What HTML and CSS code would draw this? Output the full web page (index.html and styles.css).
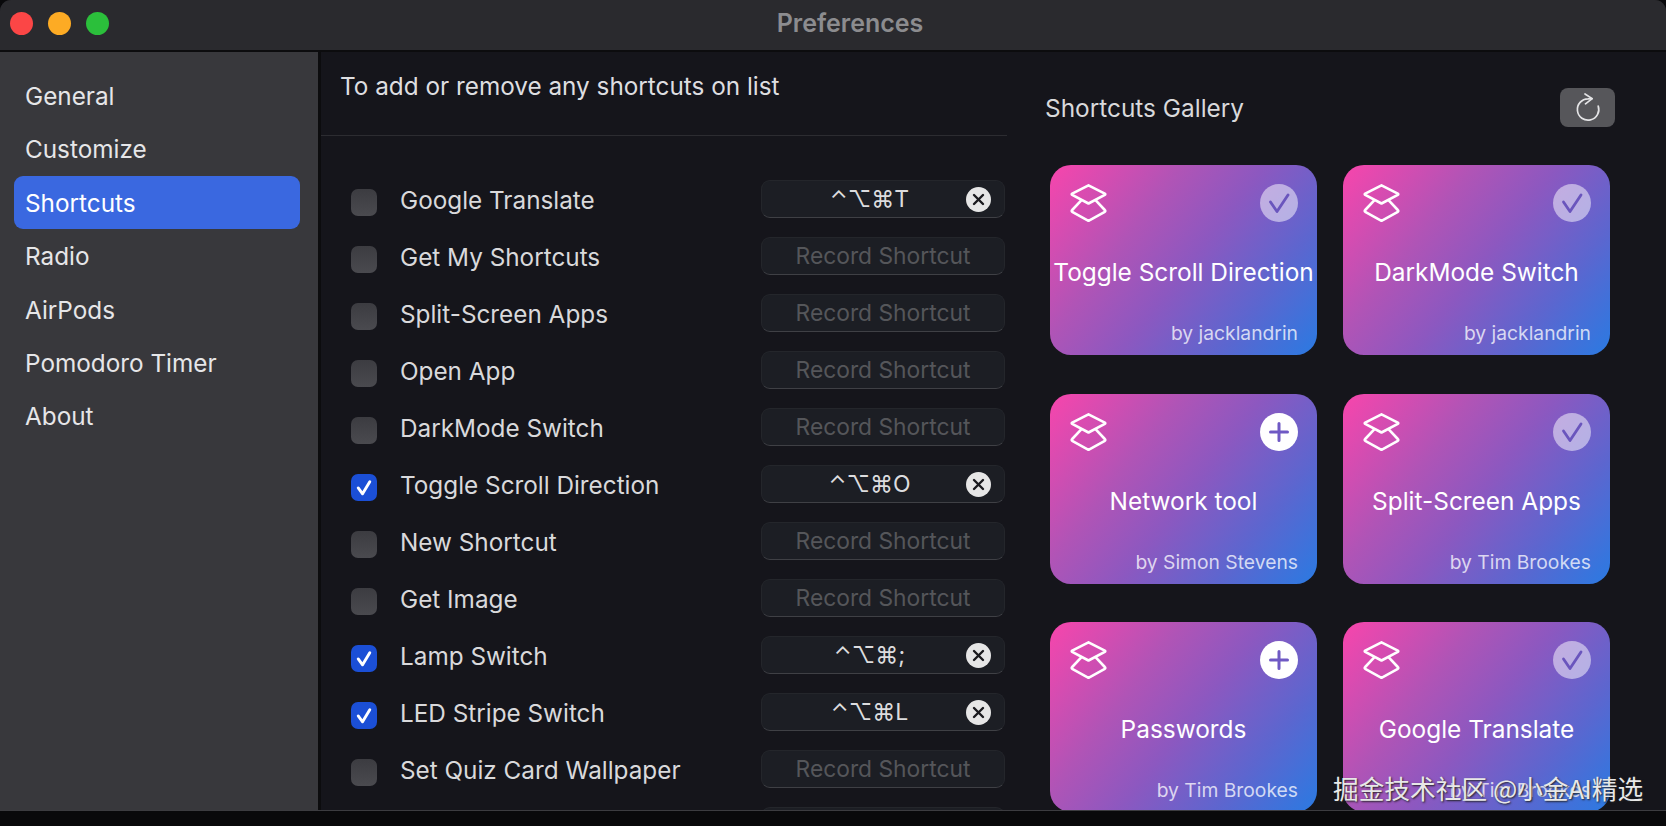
FILE: index.html
```html
<!DOCTYPE html>
<html lang="en">
<head>
<meta charset="utf-8">
<title>Preferences</title>
<link rel="stylesheet" href="styles.css">
</head>
<body>
<svg class="defs" width="0" height="0" aria-hidden="true">
  <symbol id="layers" viewBox="0 0 37 38">
    <path d="M18.500 1.300 L34.800 9.600 Q35.800 10.200 34.800 10.800 L18.500 19.500 L2.200 10.800 Q1.200 10.200 2.200 9.600 Z" fill="none" stroke="#fff" stroke-width="2.600" stroke-linejoin="round"/>
    <path d="M10.800 16.800 L2.200 26 Q1.200 27 2.200 27.800 L18.500 36.800 L34.800 27.800 Q35.800 27 34.800 26 L26.200 16.800" fill="none" stroke="#fff" stroke-width="2.600" stroke-linejoin="round" stroke-linecap="round"/>
  </symbol>
  <symbol id="tick" viewBox="0 0 38 38">
    <path d="M10.500 18 L17 27.500 L28 11" fill="none" stroke="#6a55bd" stroke-width="2.800" stroke-linecap="round" stroke-linejoin="round"/>
  </symbol>
  <symbol id="plus" viewBox="0 0 38 38">
    <path d="M10.500 19 H27.500 M19 10.500 V27.500" fill="none" stroke="#6f59c4" stroke-width="3" stroke-linecap="round"/>
  </symbol>
  <symbol id="cross" viewBox="0 0 25 25">
    <path d="M8 8 L17 17 M17 8 L8 17" fill="none" stroke="#1a1a1e" stroke-width="2.400" stroke-linecap="round"/>
  </symbol>
  <symbol id="check" viewBox="0 0 27 27">
    <path d="M7.500 14 L12 20 L19.500 7.500" fill="none" stroke="#fff" stroke-width="3" stroke-linecap="round" stroke-linejoin="round"/>
  </symbol>
</svg>

<div class="window">
  <header class="titlebar">
    <div class="lights">
      <span class="light red"></span>
      <span class="light amber"></span>
      <span class="light green"></span>
    </div>
    <h1 class="wintitle">Preferences</h1>
  </header>

  <div class="main">
    <nav class="sidebar">
      <a class="navitem">General</a>
      <a class="navitem">Customize</a>
      <a class="navitem active">Shortcuts</a>
      <a class="navitem">Radio</a>
      <a class="navitem">AirPods</a>
      <a class="navitem">Pomodoro Timer</a>
      <a class="navitem">About</a>
    </nav>

    <section class="listpane">
      <p class="hint">To add or remove any shortcuts on list</p>
      <div class="rows">
        <div class="row"><span class="box"></span><span class="label">Google Translate</span><div class="field set"><span class="keys">⌃⌥⌘T</span><span class="clear"><svg><use href="#cross"/></svg></span></div></div>
        <div class="row"><span class="box"></span><span class="label">Get My Shortcuts</span><div class="field">Record Shortcut</div></div>
        <div class="row"><span class="box"></span><span class="label">Split-Screen Apps</span><div class="field">Record Shortcut</div></div>
        <div class="row"><span class="box"></span><span class="label">Open App</span><div class="field">Record Shortcut</div></div>
        <div class="row"><span class="box"></span><span class="label">DarkMode Switch</span><div class="field">Record Shortcut</div></div>
        <div class="row"><span class="box on"><svg><use href="#check"/></svg></span><span class="label">Toggle Scroll Direction</span><div class="field set"><span class="keys">⌃⌥⌘O</span><span class="clear"><svg><use href="#cross"/></svg></span></div></div>
        <div class="row"><span class="box"></span><span class="label">New Shortcut</span><div class="field">Record Shortcut</div></div>
        <div class="row"><span class="box"></span><span class="label">Get Image</span><div class="field">Record Shortcut</div></div>
        <div class="row"><span class="box on"><svg><use href="#check"/></svg></span><span class="label">Lamp Switch</span><div class="field set"><span class="keys">⌃⌥⌘;</span><span class="clear"><svg><use href="#cross"/></svg></span></div></div>
        <div class="row"><span class="box on"><svg><use href="#check"/></svg></span><span class="label">LED Stripe Switch</span><div class="field set"><span class="keys">⌃⌥⌘L</span><span class="clear"><svg><use href="#cross"/></svg></span></div></div>
        <div class="row"><span class="box"></span><span class="label">Set Quiz Card Wallpaper</span><div class="field">Record Shortcut</div></div>
        <div class="row"><span class="box"></span><span class="label"></span><div class="field"></div></div>
      </div>
    </section>

    <section class="gallery">
      <div class="galleryhead">
        <h2 class="gallerytitle">Shortcuts Gallery</h2>
        <button class="refresh" type="button" aria-label="Refresh">
          <svg viewBox="0 0 26 30" width="26" height="30"><path d="M17 5.600 L13 5.800 A10.700 10.700 0 1 0 23.200 13" fill="none" stroke="#e4e4e6" stroke-width="1.700" stroke-linecap="round"/><path d="M10 1 L17.200 5.600 L10.500 10.800" fill="none" stroke="#e4e4e6" stroke-width="1.700" stroke-linecap="round" stroke-linejoin="round"/></svg>
        </button>
      </div>
      <div class="cards">
        <article class="card"><div class="cardtop"><svg class="layers"><use href="#layers"/></svg><span class="badge added"><svg><use href="#tick"/></svg></span></div><div class="cardname">Toggle Scroll Direction</div><div class="cardby">by jacklandrin</div></article>
        <article class="card"><div class="cardtop"><svg class="layers"><use href="#layers"/></svg><span class="badge added"><svg><use href="#tick"/></svg></span></div><div class="cardname">DarkMode Switch</div><div class="cardby">by jacklandrin</div></article>
        <article class="card"><div class="cardtop"><svg class="layers"><use href="#layers"/></svg><span class="badge"><svg><use href="#plus"/></svg></span></div><div class="cardname">Network tool</div><div class="cardby">by Simon Stevens</div></article>
        <article class="card"><div class="cardtop"><svg class="layers"><use href="#layers"/></svg><span class="badge added"><svg><use href="#tick"/></svg></span></div><div class="cardname">Split-Screen Apps</div><div class="cardby">by Tim Brookes</div></article>
        <article class="card"><div class="cardtop"><svg class="layers"><use href="#layers"/></svg><span class="badge"><svg><use href="#plus"/></svg></span></div><div class="cardname">Passwords</div><div class="cardby">by Tim Brookes</div></article>
        <article class="card"><div class="cardtop"><svg class="layers"><use href="#layers"/></svg><span class="badge added"><svg><use href="#tick"/></svg></span></div><div class="cardname">Google Translate</div><div class="cardby">by Tim Brookes</div></article>
      </div>
    </section>
  </div>
</div>
<div class="watermark">掘金技术社区 @小金AI精选</div>
</body>
</html>
```

FILE: styles.css
```css
* { box-sizing: border-box; }
html, body { margin: 0; height: 100%; }
body {
  background: #09090b;
  overflow: hidden;
  font-family: Inter, "Noto Sans CJK SC", sans-serif;
  color: #dedee0;
}
.defs { display: block; height: 0; }

.window {
  height: 811px;
  display: flex;
  flex-direction: column;
  overflow: hidden;
  border-radius: 11px 11px 0 0;
  background: #15151b;
  border-bottom: 1px solid #3c3c40;
}

.titlebar {
  flex: 0 0 52px;
  display: flex;
  align-items: center;
  padding: 0 0 4px 10px;
  background: #2a2a2e;
  border-bottom: 2px solid #0c0c0e;
}
.lights { display: flex; gap: 15px; width: 110px; }
.light { width: 23px; height: 23px; border-radius: 50%; }
.red { background: #fb4646; }
.amber { background: #fdab24; }
.green { background: #2bbf3b; }
.wintitle {
  margin: 0;
  flex: 1;
  padding-right: 86px;
  text-align: center;
  font-size: 25px;
  font-weight: 600;
  color: #8c8c8f;
}

.main { flex: 1; display: flex; min-height: 0; }

.sidebar {
  flex: 0 0 321px;
  padding: 17px 18px 0 14px;
  background: #38383c;
  border-right: 3px solid #0c0c0e;
}
.navitem {
  display: block;
  height: 53.400px;
  line-height: 55px;
  padding-left: 11px;
  border-radius: 9px;
  font-size: 24.300px;
  color: #e6e6e8;
}
.navitem.active { background: #3a68e0; color: #fff; }

.listpane { flex: 0 0 686px; overflow: hidden; }
.hint {
  margin: 0;
  height: 84px;
  padding: 20px 0 0 19px;
  line-height: 28px;
  font-size: 24.300px;
  border-bottom: 1px solid #2c2c31;
}
.rows {
  display: flex;
  flex-direction: column;
  gap: 19px;
  padding: 44px 2px 0 30px;
}
.row { display: flex; align-items: center; height: 38px; }
.box {
  flex: 0 0 26px;
  height: 27px;
  margin: 7px 23px 0 0;
  border-radius: 7px;
  background: linear-gradient(#3c3c41, #4a4a4f);
}
.box svg { display: block; width: 26px; height: 27px; }
.box.on { background: #1b4fd6; }
.label { flex: 1; font-size: 24.300px; color: #d9d9db; padding-top: 2px; }
.field {
  flex: 0 0 244px;
  height: 38px;
  padding-bottom: 2px;
  display: flex;
  align-items: center;
  justify-content: center;
  border: 1px solid #24262b;
  border-bottom-color: #3f4045;
  border-radius: 9px;
  background: #1c1e24;
  font-size: 22.800px;
  color: #55565a;
}
.field.set { padding: 0 13px 0 11px; }
.keys {
  flex: 1;
  text-align: center;
  font-family: Inter, "DejaVu Sans", sans-serif;
  font-size: 23px;
  color: #dcdcde;
}
.clear { flex: 0 0 25px; height: 25px; border-radius: 50%; background: #e6e6e6; }
.clear svg { display: block; width: 25px; height: 25px; }

.gallery { flex: 1; padding: 36px 0 0 38px; overflow: hidden; }
.galleryhead {
  display: flex;
  align-items: center;
  justify-content: space-between;
  width: 570px;
  height: 39px;
}
.gallerytitle { margin: 0; font-size: 24.400px; font-weight: 400; color: #d9d9db; }
.refresh {
  width: 55px;
  height: 39px;
  padding: 0;
  border: 0;
  border-radius: 8px;
  background: #56565a;
  display: flex;
  align-items: center;
  justify-content: center;
}
.cards {
  display: grid;
  grid-template-columns: 267px 267px;
  grid-auto-rows: 190px;
  gap: 38.500px 26px;
  margin: 38px 0 0 5px;
}
.card {
  display: flex;
  flex-direction: column;
  padding: 19px 19px 0 20px;
  border-radius: 21px;
  background: linear-gradient(128deg, #f845ac 0%, #b054b6 32%, #8c58c0 52%, #5c66cf 76%, #2a7ae2 100%);
  color: #fff;
}
.cardtop { display: flex; justify-content: space-between; height: 38px; }
.layers { width: 37px; height: 38px; }
.badge { width: 38px; height: 38px; border-radius: 50%; background: #fff; }
.badge svg { display: block; width: 38px; height: 38px; }
.badge.added { background: rgba(255, 255, 255, 0.5); }
.cardname {
  margin: 32px -19px 0 -20px;
  height: 36px;
  line-height: 36px;
  text-align: center;
  white-space: nowrap;
  font-size: 24.400px;
  font-weight: 400;
}
.cardby {
  margin-top: 32px;
  text-align: right;
  line-height: 22px;
  font-size: 19.300px;
  color: rgba(255, 255, 255, 0.75);
}

.watermark {
  position: absolute;
  left: 1333px;
  top: 771px;
  font-family: "Noto Sans CJK SC", sans-serif;
  font-size: 25.700px;
  line-height: 34px;
  white-space: nowrap;
  color: #e8e8e8;
  text-shadow: 1px 1px 2px #222;
}
```
